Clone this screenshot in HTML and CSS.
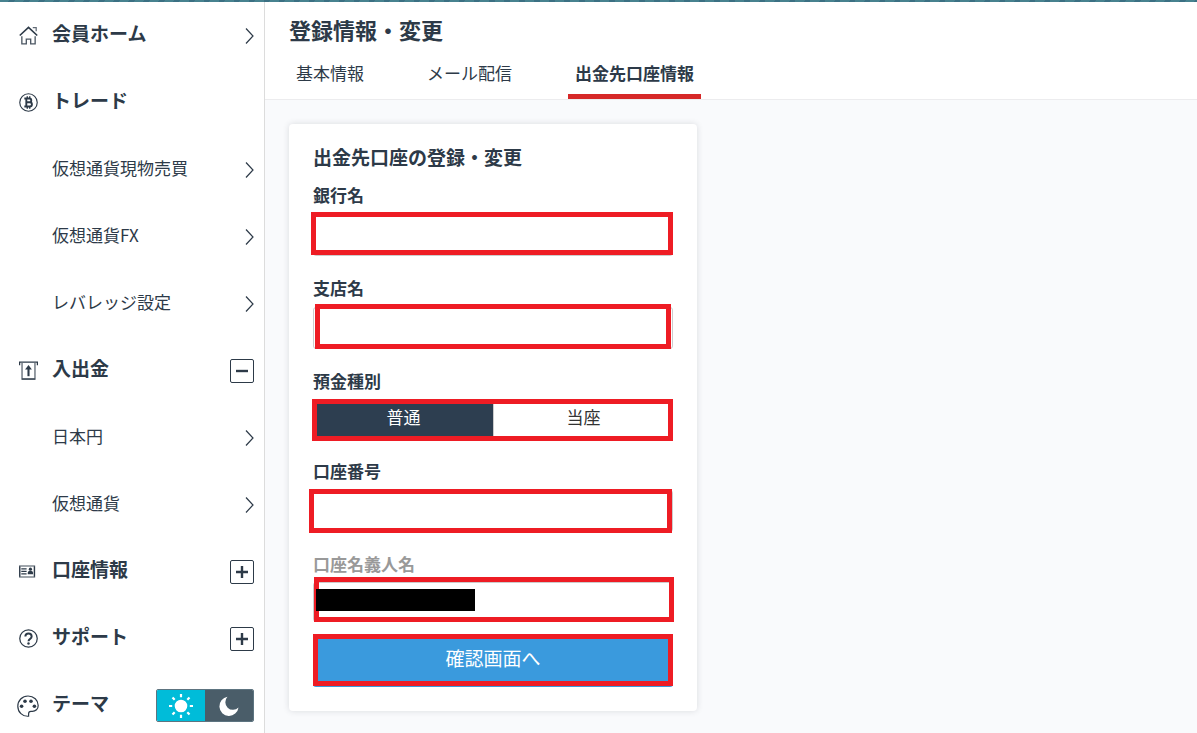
FILE: index.html
```html
<!DOCTYPE html>
<html lang="ja">
<head>
<meta charset="utf-8">
<meta name="viewport" content="width=device-width, initial-scale=1">
<title>登録情報・変更</title>
<link rel="stylesheet" href="styles.css">
</head>
<body>
<svg class="defs" aria-hidden="true">
  <symbol id="chevron" viewBox="0 0 9 18"><path d="M1 1.5 8 9 1 16.5" fill="none" stroke="currentColor" stroke-width="1.2"/></symbol>
  <symbol id="minus" viewBox="0 0 12 12"><path d="M0 6h12" stroke="currentColor" stroke-width="2.4"/></symbol>
  <symbol id="plus" viewBox="0 0 12 12"><path d="M0 6h12M6 0v12" stroke="currentColor" stroke-width="2.4"/></symbol>
</svg>
<div class="topbar"></div>
<div class="app">
  <nav class="sidebar" aria-label="メニュー">
    <a class="row main-row" href="#home">
      <svg class="icon" viewBox="0 0 20 20" fill="none" stroke="currentColor"><path d="M.8 10 10 1.4l9.2 8.6" stroke-width="1.7"/><path d="M14.500 1.600h3.600v4" stroke-width="1.300" opacity=".75"/><path d="M3 10.800v8.100h4.700v-5h4.600v5H17v-8.100" stroke-width="1.400" opacity=".85"/></svg>
      <span class="name">会員ホーム</span>
      <svg class="chevron"><use href="#chevron"/></svg>
    </a>
    <div class="row main-row">
      <svg class="icon" viewBox="0 0 20 20" fill="none" stroke="currentColor"><circle cx="10" cy="10" r="9.2" stroke-width="1.2"/><path d="M5.600 5.800h5.300a2 2 0 0 1 0 4H7.800h3.600a2.200 2.200 0 0 1 0 4.400H5.600M7.700 5.800v8.400" stroke-width="2"/><path d="M8.700 3.400v2.400M11.300 3.400v2.400M8.700 14.200v2.400M11.300 14.200v2.400" stroke-width="1.500"/></svg>
      <span class="name">トレード</span>
    </div>
    <a class="row" href="#spot"><span class="name sub">仮想通貨現物売買</span><svg class="chevron"><use href="#chevron"/></svg></a>
    <a class="row" href="#fx"><span class="name sub">仮想通貨FX</span><svg class="chevron"><use href="#chevron"/></svg></a>
    <a class="row" href="#leverage"><span class="name sub">レバレッジ設定</span><svg class="chevron"><use href="#chevron"/></svg></a>
    <div class="row main-row">
      <svg class="icon" viewBox="0 0 20 20" fill="none" stroke="currentColor"><path d="M.6 4.500V1.200h18.800v3.300" stroke-width="1.400"/><path d="M3.200 2v17h13.600V2" stroke-width="1.500" opacity=".7"/><path d="M3 19h14" stroke-width="1.200"/><path d="M10 16V7" stroke-width="2.200"/><path d="m10 4.300 3.600 4.600H6.400z" fill="currentColor" stroke="none"/></svg>
      <span class="name">入出金</span>
      <button class="expander" type="button" aria-label="入出金を閉じる"><svg><use href="#minus"/></svg></button>
    </div>
    <a class="row" href="#jpy"><span class="name sub">日本円</span><svg class="chevron"><use href="#chevron"/></svg></a>
    <a class="row" href="#crypto"><span class="name sub">仮想通貨</span><svg class="chevron"><use href="#chevron"/></svg></a>
    <div class="row main-row">
      <svg class="icon" viewBox="0 0 20 20" fill="none" stroke="currentColor"><path d="M.8 4.200h15.400v11.600H.8z" stroke-width="1.600" opacity=".6"/><path d="M.7 4.500v11M16.300 4.500v11" stroke-width="1.200"/><path d="M2.400 7.300h5.600M2.400 9.900h5.600M2.400 12.500h5.600" stroke-width="1.300"/><circle cx="12" cy="7.500" r="1.700" fill="currentColor" stroke="none"/><path d="M9.200 13v-1.800q0-1.900 2.800-1.900t2.800 1.900V13z" fill="currentColor" stroke="none"/></svg>
      <span class="name">口座情報</span>
      <button class="expander" type="button" aria-label="口座情報を開く"><svg><use href="#plus"/></svg></button>
    </div>
    <div class="row main-row">
      <svg class="icon" viewBox="0 0 20 20" fill="none" stroke="currentColor"><circle cx="10" cy="10" r="9.200" stroke-width="1.300"/><path d="M6.700 8q0-3.200 3.300-3.200T13.300 8q0 1.300-1.600 2.300T10 12.900" stroke-width="2.100"/><circle cx="10" cy="15.300" r="1.300" fill="currentColor" stroke="none"/></svg>
      <span class="name">サポート</span>
      <button class="expander" type="button" aria-label="サポートを開く"><svg><use href="#plus"/></svg></button>
    </div>
    <div class="row main-row">
      <svg class="icon palette" viewBox="0 0 22 22" fill="none" stroke="currentColor"><path d="M11.600 21.200C5.500 21.700.8 17 .8 11.200.8 5.500 5.200 1 11 1s10.200 4.300 10.200 9.400c0 3.600-2.700 6-5.800 6h-1.500c-1.600 0-2.300 1-2.300 2.300z" stroke-width="1.200"/><g fill="currentColor" stroke="none"><circle cx="4.600" cy="11.200" r="1.800"/><circle cx="8" cy="6.200" r="1.800"/><circle cx="14" cy="6.200" r="1.800"/><circle cx="17.400" cy="11.200" r="1.800"/></g></svg>
      <span class="name">テーマ</span>
      <div class="theme" role="radiogroup" aria-label="テーマ">
        <label class="light"><input type="radio" name="theme" aria-label="ライト" checked>
          <svg viewBox="0 0 24 24" fill="#fff" stroke="#fff" stroke-width="2.200"><circle cx="12" cy="12" r="5.200"/><path d="M12 0v3.200M12 20.800V24M0 12h3.200M20.800 12H24M3.500 3.500l2.200 2.200M18.300 18.300l2.200 2.200M20.500 3.500l-2.200 2.200M5.700 18.300l-2.200 2.200"/></svg></label>
        <label class="dark"><input type="radio" name="theme" aria-label="ダーク">
          <svg viewBox="0 0 24 24" fill="#fff"><path d="M10.500 2.800A9.600 9.600 0 1 0 21.500 13.500 7.400 7.400 0 0 1 10.500 2.800z"/></svg></label>
      </div>
    </div>
  </nav>
  <main class="content">
    <header class="page-head">
      <h1>登録情報・変更</h1>
      <nav class="tabs" aria-label="登録情報">
        <a href="#basic">基本情報</a>
        <a href="#mail">メール配信</a>
        <a class="active" href="#bank" aria-current="page">出金先口座情報</a>
      </nav>
    </header>
    <form class="card">
      <h2>出金先口座の登録・変更</h2>
      <label class="caption" for="bank-name">銀行名</label>
      <div class="box mark mark-bank"><input id="bank-name" type="text"></div>
      <label class="caption" for="branch">支店名</label>
      <div class="box mark mark-branch"><input id="branch" type="text"></div>
      <span class="caption" id="kind">預金種別</span>
      <div class="box mark mark-kind segments" role="radiogroup" aria-labelledby="kind">
        <label><input type="radio" name="kind" checked><span>普通</span></label>
        <label><input type="radio" name="kind"><span>当座</span></label>
      </div>
      <label class="caption" for="number">口座番号</label>
      <div class="box mark mark-number"><input id="number" type="text"></div>
      <label class="caption muted" for="holder">口座名義人名</label>
      <div class="box mark mark-holder"><input id="holder" type="text" readonly><span class="redacted"></span></div>
      <div class="mark mark-submit"><button class="submit" type="button">確認画面へ</button></div>
    </form>
  </main>
</div>
</body>
</html>
```

FILE: styles.css
```css
* { box-sizing: border-box; }

body {
  margin: 0;
  height: 100vh;
  display: flex;
  flex-direction: column;
  overflow: hidden;
  background: #f9fafc;
  color: #2d3a48;
  font-family: "Noto Sans CJK JP", sans-serif;
  font-size: 17px;
  line-height: 24px;
}

a { color: inherit; text-decoration: none; }
h1, h2 { margin: 0; font-weight: 700; }
input, button { font: inherit; color: inherit; }
.defs { position: absolute; width: 0; height: 0; }

.topbar {
  flex: none;
  height: 2px;
  background: repeating-linear-gradient(120deg, #47828f 0 8px, #3b7083 8px 13px);
}

.app { flex: 1; min-height: 0; display: flex; }

/* Sidebar */
.sidebar {
  flex: none;
  width: 265px;
  overflow-y: auto;
  scrollbar-width: none;
  background: #fff;
  border-right: 1px solid #dcdcdc;
}
.row {
  display: flex;
  align-items: center;
  height: 67px;
  padding: 0 10px 0 17px;
}
.icon { flex: none; width: 19px; height: 19px; margin: 0 14px 0 2px; }
.palette { width: 22px; height: 22px; margin: 0 13px 0 0; }
.name { flex: 1; padding-bottom: 4px; }
.main-row .name { padding-bottom: 6px; font-size: 19px; font-weight: 700; }
.sub { padding-left: 35px; }
.chevron { width: 9px; height: 18px; }

.expander {
  display: grid;
  place-items: center;
  width: 24px;
  height: 24px;
  padding: 0;
  background: #fff;
  border: 1px solid #2d3a48;
  border-radius: 2px;
}
.expander svg { width: 12px; height: 12px; }

.theme {
  display: flex;
  width: 98px;
  height: 33px;
  border: 1px solid #5d7480;
  border-radius: 2px;
  overflow: hidden;
}
.theme label { flex: 1; display: grid; place-items: center; }
.theme svg { width: 24px; height: 24px; }
.light { background: #00bcd9; }
.dark { background: #4a5d69; }
.theme input, .segments input {
  position: absolute;
  width: 1px;
  height: 1px;
  margin: 0;
  opacity: 0;
}

/* Main column */
.content { flex: 1; min-width: 0; }
.page-head {
  padding: 11px 24px 0;
  background: #fff;
  border-bottom: 1px solid #ececee;
}
h1 { font-size: 22px; line-height: 32px; }
.tabs { display: flex; gap: 49px; padding-top: 14px; }
.tabs a { height: 40px; padding: 2px 7px 0; }
.tabs .active { border-bottom: 5px solid #d62828; font-weight: 700; }

.card {
  display: flex;
  flex-direction: column;
  max-width: 408px;
  margin: 24px;
  padding: 19px 24px 24px;
  background: #fff;
  border-radius: 4px;
  box-shadow: 0 0 6px rgba(40, 50, 60, .15);
}
h2 { padding-bottom: 12px; font-size: 19px; line-height: 28px; }
.caption { padding-bottom: 7px; font-weight: 700; }
.muted { color: #999; }

.box { height: 42px; margin-bottom: 20px; }
.box input[type="text"] {
  display: block;
  width: 100%;
  height: 100%;
  padding: 0 12px;
  background: #fff;
  border: 1px solid #ccc;
  border-radius: 3px;
}

.segments { display: flex; }
.segments label { flex: 1; display: flex; }
.segments span {
  flex: 1;
  padding-top: 5px;
  border-left: 1px solid #ccc;
  color: #333;
  text-align: center;
}
.segments input:checked + span { background: #2d3e50; color: #fff; border-color: #2d3e50; }

/* Red emphasis frames laid over the controls */
.mark { position: relative; }
.mark::after {
  content: "";
  position: absolute;
  border: 5px solid #ee1c24;
  pointer-events: none;
}
.mark-bank::after { inset: -2px 0 1px -2px; }
.mark-branch::after { inset: -3px 2px 0 2px; }
.mark-kind { height: 39px; }
.mark-kind::after { inset: -1px 0 -2px -1px; }
.mark-number::after { inset: -1px 1px -1px -4px; }
.mark-holder { height: 40px; margin: -1px 0 13px; }
.mark-holder::after { inset: -5px -1px 0 1px; }
.mark-submit::after { inset: -1px 0 1px; }
.redacted {
  position: absolute;
  z-index: 1;
  left: 3px;
  top: 7px;
  width: 159px;
  height: 22px;
  background: #000;
}

.submit {
  display: block;
  width: 100%;
  height: 52px;
  padding: 0 0 6px;
  background: #3a9add;
  border: 0;
  border-radius: 3px;
  color: #fff;
  font-size: 19px;
}
```
